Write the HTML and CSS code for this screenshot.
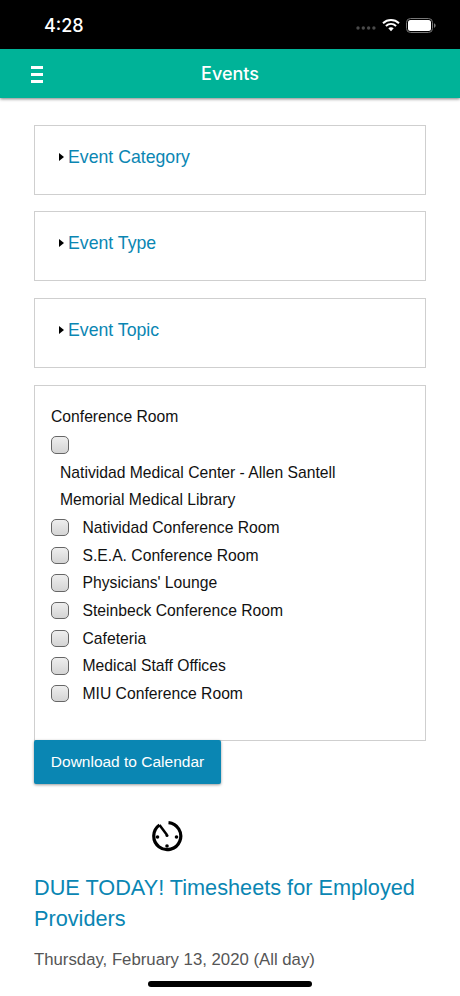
FILE: index.html
```html
<!DOCTYPE html>
<html lang="en">
<head>
<meta charset="utf-8">
<title>Events</title>
<link rel="stylesheet" href="styles.css">
</head>
<body>
<div class="screen">
  <div class="status">
    <span class="time">4:28</span>
    <div class="status-icons">
      <svg class="dots" width="20" height="4" viewBox="0 0 20 4"><g fill="#4a4a4a"><circle cx="2" cy="2" r="1.7"/><circle cx="7.3" cy="2" r="1.7"/><circle cx="12.6" cy="2" r="1.7"/><circle cx="17.9" cy="2" r="1.7"/></g></svg>
      <svg class="wifi" width="18" height="14" viewBox="0 0 18 14"><g fill="none" stroke="#fff" stroke-width="2"><path d="M1 5.2C5.6 1 12.4 1 17 5.2"/><path d="M3.9 8C6.9 5.4 11.1 5.4 14.100 8"/></g><path d="M6.300 10.300C7.900 9 10.100 9 11.700 10.300L9 13.300Z" fill="#fff"/></svg>
      <svg class="battery" width="30" height="15" viewBox="0 0 30 15"><rect x="0.500" y="0.500" width="26" height="14" rx="4" fill="none" stroke="#777"/><rect x="2" y="2" width="23" height="11" rx="2.500" fill="#fff"/><path d="M28 5.200C29.200 5.600 29.600 6.500 29.600 7.500S29.200 9.400 28 9.800Z" fill="#777"/></svg>
    </div>
  </div>
  <header class="topbar">
    <div class="burger"><span></span><span></span><span></span></div>
    <h1 class="title">Events</h1>
  </header>
  <main class="content">
    <section class="panel filter"><span class="arrow"></span><a class="filter-link">Event Category</a></section>
    <section class="panel filter"><span class="arrow"></span><a class="filter-link">Event Type</a></section>
    <section class="panel filter"><span class="arrow"></span><a class="filter-link">Event Topic</a></section>
    <section class="panel rooms">
      <div class="row">Conference Room</div>
      <div class="row"><span class="check"></span></div>
      <div class="row indent">Natividad Medical Center - Allen Santell</div>
      <div class="row indent">Memorial Medical Library</div>
      <div class="row"><span class="check"></span><span class="label">Natividad Conference Room</span></div>
      <div class="row"><span class="check"></span><span class="label">S.E.A. Conference Room</span></div>
      <div class="row"><span class="check"></span><span class="label">Physicians' Lounge</span></div>
      <div class="row"><span class="check"></span><span class="label">Steinbeck Conference Room</span></div>
      <div class="row"><span class="check"></span><span class="label">Cafeteria</span></div>
      <div class="row"><span class="check"></span><span class="label">Medical Staff Offices</span></div>
      <div class="row"><span class="check"></span><span class="label">MIU Conference Room</span></div>
    </section>
    <button class="download">Download to Calendar</button>
    <div class="icon-wrap">
      <svg width="32" height="32" viewBox="0 0 32 32"><path d="M17.500 2.600A13.500 13.500 0 1 1 8.500 5" fill="none" stroke="#000" stroke-width="3.200"/><path d="M8.500 5L16 15" stroke="#000" stroke-width="2.500" fill="none"/><g fill="#000"><circle cx="6.500" cy="17" r="1.800"/><circle cx="25.500" cy="17" r="1.800"/><circle cx="16" cy="26" r="1.800"/><circle cx="16" cy="15.500" r="1.500"/></g></svg>
    </div>
    <h2 class="event-title">DUE TODAY! Timesheets for Employed Providers</h2>
    <p class="event-date">Thursday, February 13, 2020 (All day)</p>
  </main>
  <div class="home-bar"></div>
</div>
</body>
</html>
```
FILE: styles.css
```css
* { box-sizing: border-box; }
html, body { margin: 0; padding: 0; background: #fff; }
.screen {
  position: relative;
  width: 460px;
  height: 996px;
  overflow: hidden;
  font-family: "Liberation Sans", Arial, sans-serif;
  color: #111;
}
.status {
  height: 49px;
  background: #000;
  display: flex;
  align-items: center;
  justify-content: space-between;
  padding: 1px 24px 0 44px;
}
.time { color: #fff; font: 500 18px Inter, sans-serif; }
.status-icons { display: flex; align-items: center; gap: 6px; }
.dots { margin-top: 5px; }
.topbar {
  height: 49px;
  background: #00b398;
  box-shadow: 0 1px 3px rgba(0,0,0,.5);
  display: flex;
  align-items: center;
  justify-content: center;
  position: relative;
}
.burger {
  position: absolute;
  left: 31px;
  top: 17px;
  width: 12px;
  display: flex;
  flex-direction: column;
  gap: 4px;
}
.burger span { display: block; height: 3px; background: #fff; }
.title { margin: 0 0 1px; color: #fff; font: 500 18px Inter, sans-serif; }
.content { padding: 27px 34px 0 34px; }
.panel { border: 1px solid #cfcfcf; }
.filter {
  height: 70px;
  margin-bottom: 16.400px;
  padding: 21px 0 0 24px;
  display: flex;
  align-items: flex-start;
  gap: 4px;
}
.arrow {
  margin-top: 6px;
  border-left: 5px solid #000;
  border-top: 4px solid transparent;
  border-bottom: 4px solid transparent;
}
.filter-link { color: #0a86b3; font-size: 17.700px; line-height: 21px; }
.rooms { height: 356px; margin-top: 17px; padding: 17.500px 16px 0 16px; font-size: 15.700px; }
.row { min-height: 27.650px; line-height: 27.650px; display: flex; align-items: center; }
.indent { padding-left: 9px; }
.check {
  width: 17.500px;
  height: 17.500px;
  flex: none;
  border: 1px solid #666;
  border-radius: 5px;
  background: linear-gradient(#eeeeee, #d4d4d4);
}
.label { margin-left: 14px; }
.download {
  display: block;
  width: 187px;
  height: 44px;
  margin: -1px 0 0;
  border: 0;
  border-radius: 2px;
  background: #0a86b3;
  color: #fff;
  font: 15.500px "Liberation Sans", Arial, sans-serif;
  box-shadow: 0 1px 3px rgba(0,0,0,.4);
}
.icon-wrap { padding: 36px 0 0 117px; height: 88px; }
.icon-wrap svg { display: block; }
.event-title { margin: 0; font-weight: 400; font-size: 21.700px; line-height: 31.500px; color: #0a86b3; }
.event-date { margin: 15px 0 0; font-size: 16.750px; line-height: 20px; color: #555; }
.home-bar {
  position: absolute;
  left: 148px;
  bottom: 9px;
  width: 164px;
  height: 6px;
  border-radius: 3px;
  background: #000;
}
```
